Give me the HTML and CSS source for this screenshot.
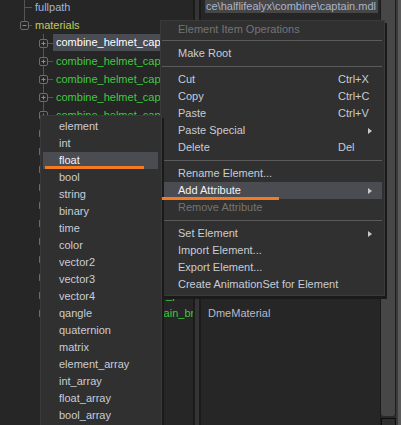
FILE: index.html
```html
<!DOCTYPE html>
<html lang="en">

<head>
    <meta charset="UTF-8">
    <meta name="viewport" content="width=device-width, initial-scale=1.0">
    <title>Element Viewer</title>
    <link rel="stylesheet" href="styles.css">
</head>

<body>
    <!-- Tree guides -->
    <svg class="defs" width="0" height="0">
        <symbol id="g-leaf" viewBox="0 0 32 18">
            <path d="M24.5 0V18M24 9.5H32" stroke="#555" fill="none" />
        </symbol>
        <symbol id="g-open" viewBox="0 0 32 18">
            <path d="M24.5 0V5M29 9.5H32" stroke="#555" fill="none" />
            <rect x="20.5" y="5.5" width="8" height="8" rx="1.5" fill="#262626" stroke="#6c6c6c" />
            <path d="M22.5 9.5H26.5" stroke="#8c8c8c" />
        </symbol>
        <symbol id="g-child" viewBox="0 0 53 18">
            <path d="M43.5 0V18M48 9.5H53" stroke="#555" fill="none" />
            <rect x="39.5" y="5.5" width="8" height="8" rx="1.5" fill="#262626" stroke="#6c6c6c" />
            <path d="M41.5 9.5H45.5M43.5 7.5V11.5" stroke="#8c8c8c" />
        </symbol>
    </svg>

    <div class="window">
        <!-- Element tree -->
        <div class="tree">
            <div class="tree-list">
                <div class="row"><svg class="guide"><use href="#g-leaf" /></svg><span class="label path">fullpath</span></div>
                <div class="row"><svg class="guide"><use href="#g-open" /></svg><span class="label group">materials</span></div>
                <div class="row"><svg class="guide child"><use href="#g-child" /></svg><span class="label selected">combine_helmet_captain</span></div>
                <div class="row"><svg class="guide child"><use href="#g-child" /></svg><span class="label mat">combine_helmet_captain_glass</span></div>
                <div class="row"><svg class="guide child"><use href="#g-child" /></svg><span class="label mat">combine_helmet_captain_lens</span></div>
                <div class="row"><svg class="guide child"><use href="#g-child" /></svg><span class="label mat">combine_helmet_captain_trim</span></div>
                <div class="row"><svg class="guide child"><use href="#g-child" /></svg><span class="label mat">combine_helmet_captain_vent</span></div>
                <div class="row"><svg class="guide child"><use href="#g-child" /></svg><span class="label mat">combine_armor_captain_chest</span></div>
                <div class="row"><svg class="guide child"><use href="#g-child" /></svg><span class="label mat">combine_armor_captain_legs</span></div>
                <div class="row"><svg class="guide child"><use href="#g-child" /></svg><span class="label mat">combine_armor_captain_arms</span></div>
                <div class="row"><svg class="guide child"><use href="#g-child" /></svg><span class="label mat">combine_armor_captain_belt</span></div>
                <div class="row"><svg class="guide child"><use href="#g-child" /></svg><span class="label mat">combine_armor_captain_pads</span></div>
                <div class="row"><svg class="guide child"><use href="#g-child" /></svg><span class="label mat">combine_body_captain_cloth</span></div>
                <div class="row"><svg class="guide child"><use href="#g-child" /></svg><span class="label mat">combine_body_captain_skin</span></div>
                <div class="row"><svg class="guide child"><use href="#g-child" /></svg><span class="label mat">combine_gear_captain_pouch</span></div>
                <div class="row"><svg class="guide child"><use href="#g-child" /></svg><span class="label mat">combine_gear_captain_tank</span></div>
                <div class="row"><svg class="guide child"><use href="#g-child" /></svg><span class="label mat">combine_helmet_visor_pbr</span></div>
                <div class="row"><svg class="guide child"><use href="#g-child" /></svg><span class="label mat">combine_helmet_captain_breather</span></div>
            </div>
        </div>

        <div class="splitter"></div>

        <!-- Attribute values -->
        <div class="props">
            <div class="prop-list">
                <div class="prop edit"><span>ce\halflifealyx\combine\captain.mdl</span></div>
                <div class="prop">16 items</div>
                <div class="prop">DmeMaterial</div>
                <div class="prop">DmeMaterial</div>
                <div class="prop">DmeMaterial</div>
                <div class="prop">DmeMaterial</div>
                <div class="prop">DmeMaterial</div>
                <div class="prop">DmeMaterial</div>
                <div class="prop">DmeMaterial</div>
                <div class="prop">DmeMaterial</div>
                <div class="prop">DmeMaterial</div>
                <div class="prop">DmeMaterial</div>
                <div class="prop">DmeMaterial</div>
                <div class="prop">DmeMaterial</div>
                <div class="prop">DmeMaterial</div>
                <div class="prop">DmeMaterial</div>
                <div class="prop">DmeMaterial</div>
                <div class="prop">DmeMaterial</div>
            </div>
        </div>

        <div class="vscroll">
            <div class="thumb"></div>
            <div class="step"></div>
        </div>
        <div class="edge"></div>
    </div>

    <!-- Context menu -->
    <div class="menu main-menu">
        <div class="item disabled"><span class="text">Element Item Operations</span></div>
        <div class="sep first"></div>
        <div class="item"><span class="text">Make Root</span></div>
        <div class="sep"></div>
        <div class="item"><span class="text">Cut</span><span class="key">Ctrl+X</span></div>
        <div class="item"><span class="text">Copy</span><span class="key">Ctrl+C</span></div>
        <div class="item"><span class="text">Paste</span><span class="key">Ctrl+V</span></div>
        <div class="item"><span class="text">Paste Special</span><span class="key"><i class="arrow"></i></span></div>
        <div class="item"><span class="text">Delete</span><span class="key">Del</span></div>
        <div class="sep"></div>
        <div class="item"><span class="text">Rename Element...</span></div>
        <div class="item active"><span class="text">Add Attribute</span><span class="key"><i class="arrow"></i></span></div>
        <div class="item disabled"><span class="text">Remove Attribute</span></div>
        <div class="sep"></div>
        <div class="item"><span class="text">Set Element</span><span class="key"><i class="arrow"></i></span></div>
        <div class="item"><span class="text">Import Element...</span></div>
        <div class="item"><span class="text">Export Element...</span></div>
        <div class="item"><span class="text">Create AnimationSet for Element</span></div>
    </div>

    <!-- Add Attribute submenu -->
    <div class="menu sub-menu">
        <div class="item">element</div>
        <div class="item">int</div>
        <div class="item active">float</div>
        <div class="item">bool</div>
        <div class="item">string</div>
        <div class="item">binary</div>
        <div class="item">time</div>
        <div class="item">color</div>
        <div class="item">vector2</div>
        <div class="item">vector3</div>
        <div class="item">vector4</div>
        <div class="item">qangle</div>
        <div class="item">quaternion</div>
        <div class="item">matrix</div>
        <div class="item">element_array</div>
        <div class="item">int_array</div>
        <div class="item">float_array</div>
        <div class="item">bool_array</div>
    </div>

    <!-- Annotation underlines -->
    <div class="mark mark-float"></div>
    <div class="mark mark-add"></div>
</body>

</html>
```

FILE: styles.css
```css
* {
    box-sizing: border-box;
    margin: 0;
    padding: 0;
}

body {
    font-family: "Liberation Sans", Arial, sans-serif;
    font-size: 11px;
    background-color: #262626;
    color: #c8ccd6;
    width: 401px;
    height: 425px;
    overflow: hidden;
    position: relative;
}

.defs {
    position: absolute;
}

.window {
    display: flex;
    height: 425px;
}

/* Tree */
.tree {
    width: 193px;
    overflow: hidden;
}

.tree-list {
    margin-top: -2px;
}

.row {
    display: flex;
    height: 18px;
    line-height: 18px;
    white-space: nowrap;
}

.guide {
    flex: none;
    width: 32px;
    height: 18px;
}

.guide.child {
    width: 53px;
}

.label {
    padding: 0 3px;
}

.label.path {
    color: #a4b3d9;
}

.label.group {
    color: #c6c85c;
}

.label.mat {
    color: #3fca3f;
}

.label.selected {
    background-color: #4a4c54;
    color: #fff;
    height: 17px;
    line-height: 17px;
}

.splitter {
    width: 8px;
    background-color: #353535;
    border-left: 2px solid #1b1b1b;
    border-right: 2px solid #1b1b1b;
}

/* Values */
.props {
    flex: 1;
    overflow: hidden;
}

.prop-list {
    margin-top: -2px;
}

.prop {
    height: 18px;
    line-height: 18px;
    padding-left: 7px;
    color: #b6bccd;
    white-space: nowrap;
}

.prop.edit {
    padding: 2px 2px 0 4px;
}

.prop.edit span {
    display: block;
    height: 13px;
    line-height: 13px;
    padding-left: 1px;
    overflow: hidden;
    background-color: #464646;
    color: #aab4cc;
}

.vscroll {
    width: 16px;
    background-color: #2a2a2a;
    border-left: 1px solid #1b1b1b;
}

.thumb {
    height: 416px;
    background-color: #474747;
    border-right: 1px solid #1e1e1e;
    border-radius: 0 0 3px 3px;
}

.step {
    height: 12px;
    margin-top: 2px;
    background-color: #2e2e2e;
    border: 1px solid #0d0d0d;
}

.edge {
    width: 5px;
    background: linear-gradient(to right, #3a3a3a 2px, #5a5a5a 2px);
}

/* Menus */
.menu {
    position: absolute;
    background-color: #303030;
    border: 1px solid #3a3a3a;
    box-shadow: 2px 3px 0 #1a1a1a;
}

.main-menu {
    left: 160px;
    top: 20px;
    width: 225px;
    padding-bottom: 2px;
}

.sub-menu {
    left: 40px;
    top: 115px;
    width: 122px;
    height: 320px;
    padding-top: 2px;
}

.item {
    display: flex;
    height: 17px;
    line-height: 17px;
    margin: 0 2px 0 1px;
    padding-left: 16px;
    white-space: nowrap;
}

.sub-menu .item {
    margin: 0 3px 0 2px;
}

.item.disabled {
    color: #747474;
}

.item.active {
    background-color: #4b4c52;
    color: #f2f2f2;
}

.item .text {
    flex: 1;
}

.item .key {
    width: 44px;
}

.arrow {
    display: inline-block;
    margin-left: 30px;
    vertical-align: middle;
    border-left: 4px solid #c8c8c8;
    border-top: 3px solid transparent;
    border-bottom: 3px solid transparent;
}

.sep {
    height: 1px;
    margin: 4px 2px 4px 1px;
    background-color: #5a5a5a;
}

.sep.first {
    margin-top: 2px;
}

/* Orange underlines */
.mark {
    position: absolute;
    height: 3px;
    background-color: #f57b22;
}

.mark-float {
    left: 45px;
    top: 166px;
    width: 99px;
}

.mark-add {
    left: 162px;
    top: 197px;
    width: 117px;
}
```
